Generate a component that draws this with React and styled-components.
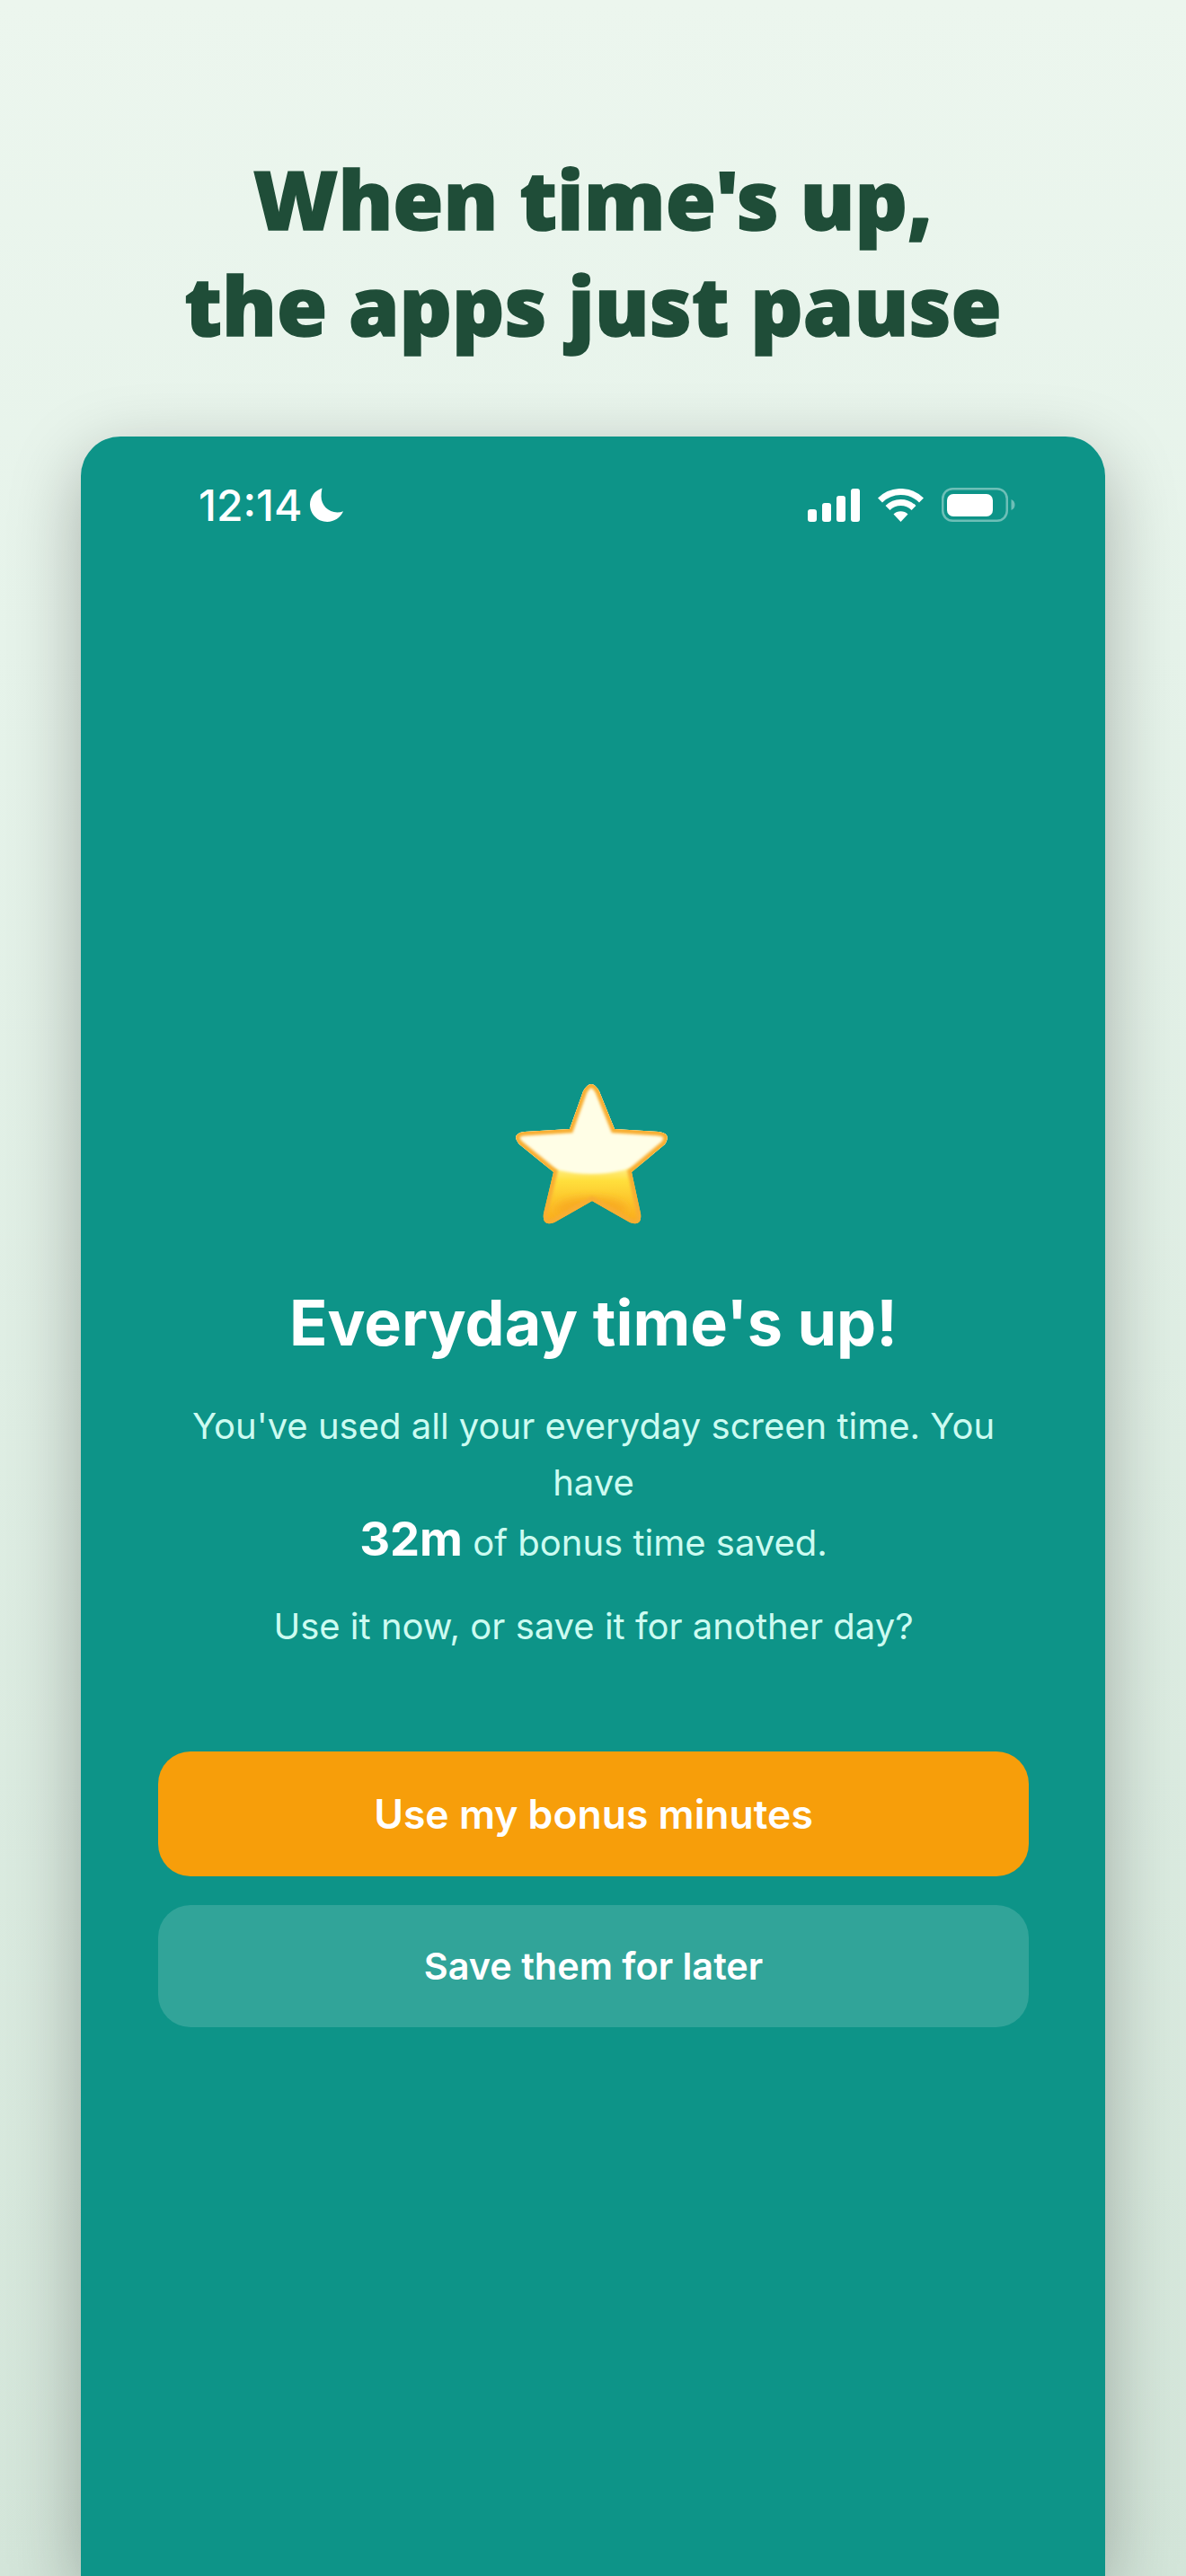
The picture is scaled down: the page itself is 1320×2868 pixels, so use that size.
import React from "react";
import styled, { createGlobalStyle } from "styled-components";

const Global = createGlobalStyle`
  html, body { margin: 0; padding: 0; }
  body { font-family: Inter, "Liberation Sans", sans-serif; }
  #root { width: 1320px; height: 2868px; overflow: hidden; }
`;

const Page = styled.div`
  width: 1320px;
  height: 2868px;
  box-sizing: border-box;
  padding-top: 162px;
  overflow: hidden;
  display: flex;
  flex-direction: column;
  align-items: center;
  background: linear-gradient(180deg, #ecf6ee 0%, #e6f3ea 25%, #d3e5d9 100%);
`;

const Headline = styled.h1`
  margin: 0 0 88px;
  width: 1140px;
  text-align: center;
  font-family: "Noto Sans", sans-serif;
  font-weight: 900;
  font-size: 91px;
  line-height: 118px;
  color: #1f4d38;
  -webkit-text-stroke: 1.5px #1f4d38;
`;

const Phone = styled.main`
  width: 1140px;
  flex: 1;
  border-radius: 44px 44px 0 0;
  background: #0d9488;
  box-shadow: 0 24px 80px rgba(0, 0, 0, 0.28);
  display: flex;
  flex-direction: column;
`;

const StatusBar = styled.header`
  padding: 56px 100px 0 131px;
  height: 40px;
  display: flex;
  align-items: center;
  justify-content: space-between;
`;

const Clock = styled.div`
  display: flex;
  align-items: center;
  gap: 9px;
  font-size: 48px;
  font-weight: 500;
  color: #fff;
`;

const StatusIcons = styled.div`
  display: flex;
  align-items: center;
  gap: 20px;
`;

const Content = styled.section`
  padding: 625px 85px 0 86px;
  display: flex;
  flex-direction: column;
  align-items: center;
`;

const StarBox = styled.svg`
  display: block;
  width: 240px;
  height: 200px;
  margin: -28px 0 0;
`;

const Title = styled.h2`
  margin: 50px 0 0;
  font-size: 70px;
  line-height: 88px;
  font-weight: 700;
  color: #fff;
  text-align: center;
`;

const Body = styled.p`
  margin: ${(p) => p.$top}px 0 0;
  width: 100%;
  text-align: center;
  font-size: 40px;
  line-height: 63px;
  font-weight: 400;
  color: #ccfbf1;
`;

const Strong = styled.strong`
  font-size: 52.5px;
  line-height: 63px;
  font-weight: 700;
  color: #fff;
`;

const Button = styled.button`
  display: block;
  width: 100%;
  border: 0;
  border-radius: 36px;
  font-family: inherit;
  font-weight: 600;
  color: #fff;
  text-align: center;
  background: ${(p) => (p.$primary ? "#f79e0a" : "rgba(255,255,255,0.15)")};
  height: ${(p) => (p.$primary ? 139 : 136)}px;
  font-size: ${(p) => (p.$primary ? 44.5 : 41.4)}px;
  margin-top: ${(p) => (p.$primary ? 108 : 32)}px;
`;

const Moon = () => (
  <svg width="38" height="38" viewBox="0 0 38 38" fill="#fff">
    <path d="M13.5 0.5C5.6 3 0 10.2 0 18.8 0 29.4 8.6 38 19.2 38c7.9 0 14.8-4.8 17.8-11.700-2 .8-4.300 1.200-6.600 1.200C20.300 27.500 12.500 19.600 12.500 9.600c0-3.200.3-6.300 1-9.100z" />
  </svg>
);

const Signal = () => (
  <svg width="58" height="37" viewBox="0 0 58 37" fill="#fff">
    <rect x="0" y="23" width="10" height="14" rx="3" />
    <rect x="16" y="16" width="10" height="21" rx="3" />
    <rect x="32" y="8" width="10" height="29" rx="3" />
    <rect x="48" y="0" width="10" height="37" rx="3" />
  </svg>
);

const Wifi = () => (
  <svg width="51" height="37" viewBox="0 0 51 37" fill="none" stroke="#fff" strokeWidth="7">
    <path d="M2.500 13A32.500 32.500 0 0 1 48.500 13" />
    <path d="M11 21.500A20.500 20.500 0 0 1 40 21.500" />
    <path d="M25.500 37L17.500 28.500A11.300 11.300 0 0 1 33.500 28.500Z" fill="#fff" stroke="none" />
  </svg>
);

const Battery = () => (
  <svg width="82" height="38" viewBox="0 0 82 38" fill="none">
    <rect x="1.250" y="1.250" width="71.500" height="35.500" rx="11" stroke="#fff" strokeOpacity="0.4" strokeWidth="2.500" />
    <rect x="6" y="7" width="51" height="25" rx="7" fill="#fff" />
    <path d="M77.500 13c2.500.8 4 3.200 4 6s-1.500 5.200-4 6z" fill="#fff" fillOpacity="0.4" />
  </svg>
);

const STAR =
  "M108 36Q117 20 126 36L143 78L192 81Q207 83 199 95L162 126L172 172Q174 187 160 182L118 158L76 182Q62 187 64 172L75 126L37 95Q27 83 43 81L93 78Z";

const Star = () => (
  <StarBox viewBox="0 0 240 200" aria-label="star">
    <defs>
      <linearGradient id="gold" x1="0" y1="0" x2="0" y2="1">
        <stop offset="0.55" stopColor="#fff6b0" />
        <stop offset="0.68" stopColor="#ffdf3c" />
        <stop offset="0.9" stopColor="#fbb421" />
        <stop offset="1" stopColor="#f6a31a" />
      </linearGradient>
      <filter id="soft" x="-20%" y="-20%" width="140%" height="140%">
        <feGaussianBlur stdDeviation="1.800" />
      </filter>
      <filter id="softer" x="-30%" y="-30%" width="160%" height="160%">
        <feGaussianBlur stdDeviation="5" />
      </filter>
      <clipPath id="starClip">
        <path d={STAR} />
      </clipPath>
    </defs>
    <g clipPath="url(#starClip)">
      <rect x="0" y="20" width="240" height="170" fill="url(#gold)" />
      <ellipse cx="117" cy="72" rx="94" ry="56" fill="#fffee6" filter="url(#soft)" />
      <ellipse cx="117" cy="168" rx="40" ry="14" fill="#f8ac20" filter="url(#softer)" />
      <path d={STAR} fill="none" stroke="#f8ae33" strokeWidth="9" filter="url(#soft)" />
    </g>
  </StarBox>
);

export default function App() {
  return (
    <Page>
      <Global />
      <Headline>
        When time's up,
        <br />
        the apps just pause
      </Headline>
      <Phone>
        <StatusBar>
          <Clock>
            12:14
            <Moon />
          </Clock>
          <StatusIcons>
            <Signal />
            <Wifi />
            <Battery />
          </StatusIcons>
        </StatusBar>
        <Content>
          <Star />
          <Title>Everyday time's up!</Title>
          <Body $top={39}>
            You've used all your everyday screen time. You have
            <br />
            <Strong>32m</Strong> of bonus time saved.
          </Body>
          <Body $top={30}>Use it now, or save it for another day?</Body>
          <Button $primary>Use my bonus minutes</Button>
          <Button>Save them for later</Button>
        </Content>
      </Phone>
    </Page>
  );
}
